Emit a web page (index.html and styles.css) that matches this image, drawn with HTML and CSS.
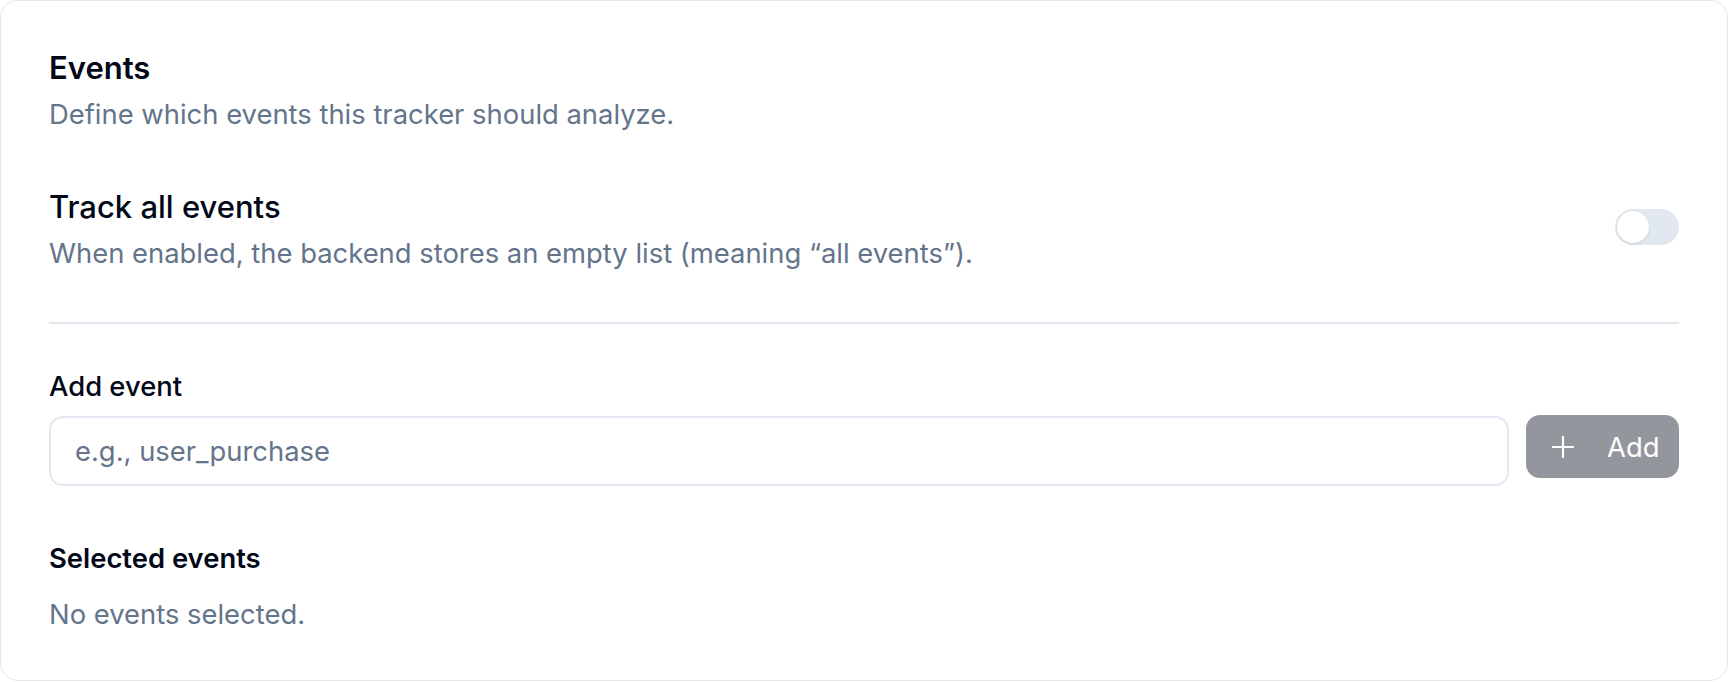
FILE: index.html
```html
<!DOCTYPE html>
<html lang="en">
<head>
<meta charset="utf-8">
<title>Events</title>
<link rel="stylesheet" href="styles.css">
</head>
<body>
<div class="card">
  <div class="header">
    <h2 class="title">Events</h2>
    <p class="desc">Define which events this tracker should analyze.</p>
  </div>
  <div class="track-row">
    <div class="track-text">
      <h3 class="title">Track all events</h3>
      <p class="desc">When enabled, the backend stores an empty list (meaning “all events”).</p>
    </div>
    <button class="toggle" type="button" aria-label="Track all events"><span class="thumb"></span></button>
  </div>
  <div class="divider"></div>
  <label class="label" for="ev">Add event</label>
  <div class="add-row">
    <input id="ev" class="input" type="text" placeholder="e.g., user_purchase">
    <button class="add-btn" type="button">
      <svg class="plus" viewBox="0 0 22 22" width="22" height="22" fill="none" stroke="currentColor" stroke-width="2.2" stroke-linecap="round"><path d="M11 1v20M1 11h20"/></svg>
      <span>Add</span>
    </button>
  </div>
  <h4 class="sel-title">Selected events</h4>
  <p class="empty">No events selected.</p>
</div>
</body>
</html>
```

FILE: styles.css
```css
* { box-sizing: border-box; }
html, body { margin: 0; padding: 0; background: #ffffff; }
body { font-family: Inter, "Noto Sans", sans-serif; color: #020817; }
.card {
  width: 1728px;
  height: 681px;
  border: 1px solid #e2e8f0;
  border-radius: 18px;
  background: #fff;
  padding: 47px 48px 0 48px;
}
.title {
  margin: 0;
  font-size: 31px;
  line-height: 40px;
  font-weight: 600;
  color: #020817;
}
.desc {
  margin: 6px 0 0 0;
  font-size: 27.4px;
  line-height: 40px;
  color: #64748b;
}
.track-row {
  margin-top: 53px;
  display: flex;
  align-items: center;
  justify-content: space-between;
}
.track-text .title { font-weight: 500; }
.toggle {
  width: 64px;
  height: 36px;
  border-radius: 18px;
  border: 2px solid transparent;
  background: #e2e8f0;
  padding: 0;
  display: flex;
  align-items: center;
  margin-top: -6px;
}
.thumb {
  width: 32px;
  height: 32px;
  border-radius: 50%;
  background: #fff;
  box-shadow: 0 1px 3px rgba(15, 23, 42, 0.12), 0 0 0 1px #e2e8f0;
}
.divider {
  margin-top: 49px;
  height: 2px;
  background: #e2e8f0;
}
.label {
  display: block;
  margin-top: 44px;
  font-size: 27.4px;
  line-height: 36px;
  font-weight: 500;
  color: #020817;
}
.add-row {
  margin-top: 12px;
  display: flex;
  align-items: flex-start;
  gap: 17px;
}
.input {
  flex: 1;
  height: 70px;
  border: 2px solid #e2e8f0;
  border-radius: 14px;
  padding: 0 24px;
  font-family: Inter, "Noto Sans", sans-serif;
  font-size: 27.4px;
  color: #020817;
  background: #fff;
  outline: none;
}
.input::placeholder { color: #64748b; }
.add-btn {
  width: 153px;
  height: 63px;
  border: none;
  border-radius: 14px;
  background: #94969d;
  color: #fff;
  display: flex;
  align-items: center;
  justify-content: flex-start;
  padding: 0 0 0 26px;
  gap: 33px;
  font-family: Inter, "Noto Sans", sans-serif;
  font-size: 27.4px;
  font-weight: 400;
  margin-top: -1px;
}
.plus { width: 22px; height: 22px; }
.sel-title {
  margin: 54px 0 0 0;
  font-size: 27.4px;
  line-height: 36px;
  font-weight: 600;
  color: #020817;
}
.empty {
  margin: 20px 0 0 0;
  font-size: 27.4px;
  line-height: 36px;
  color: #64748b;
}
```
